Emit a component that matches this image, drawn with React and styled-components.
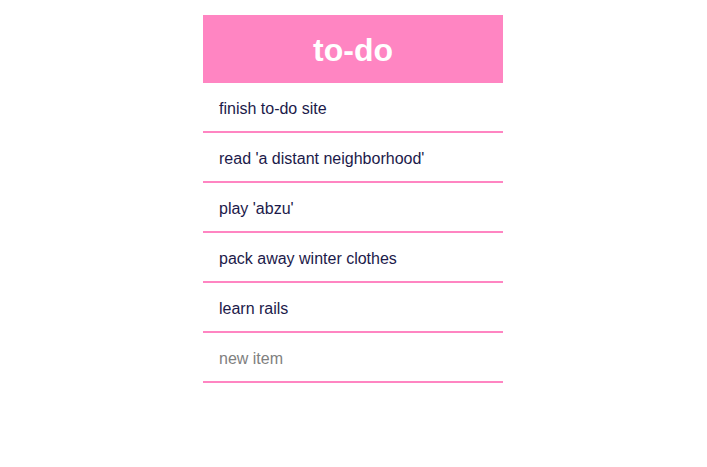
import React from "react";
import styled, { createGlobalStyle } from "styled-components";

const Global = createGlobalStyle`
  html, body { margin: 0; padding: 0; background: #fff; }
  body { font-family: "Liberation Sans", Arial, sans-serif; }
`;

const PINK = "#ff85c2";

const Page = styled.div`
  display: flex;
  justify-content: center;
  padding-top: 15px;
  padding-right: 1px;
`;

const Card = styled.div`
  width: 300px;
  display: flex;
  flex-direction: column;
`;

const Header = styled.h1`
  margin: 0;
  height: 68px;
  background: ${PINK};
  color: #fff;
  font-size: 32px;
  font-weight: bold;
  display: flex;
  align-items: center;
  justify-content: center;
  padding-top: 2px;
  box-sizing: border-box;
`;

const List = styled.ul`
  list-style: none;
  margin: 0;
  padding: 0;
`;

const Item = styled.li`
  box-sizing: border-box;
  height: 50px;
  border-bottom: 2px solid ${PINK};
  display: flex;
  align-items: center;
  padding: 4px 16px 0;
  font-size: 16px;
  color: #1c1a4a;
`;

const NewItem = styled.input`
  width: 100%;
  height: 100%;
  border: none;
  outline: none;
  padding: 0;
  font-family: "Liberation Sans", Arial, sans-serif;
  font-size: 16px;
  color: #1c1a4a;
  background: transparent;
  &::placeholder { color: #808080; }
`;

const items = [
  "finish to-do site",
  "read 'a distant neighborhood'",
  "play 'abzu'",
  "pack away winter clothes",
  "learn rails",
];

export default function App() {
  return (
    <>
      <Global />
      <Page>
        <Card>
          <Header>to-do</Header>
          <List>
            {items.map((t) => (
              <Item key={t}>{t}</Item>
            ))}
            <Item>
              <NewItem placeholder="new item" />
            </Item>
          </List>
        </Card>
      </Page>
    </>
  );
}
